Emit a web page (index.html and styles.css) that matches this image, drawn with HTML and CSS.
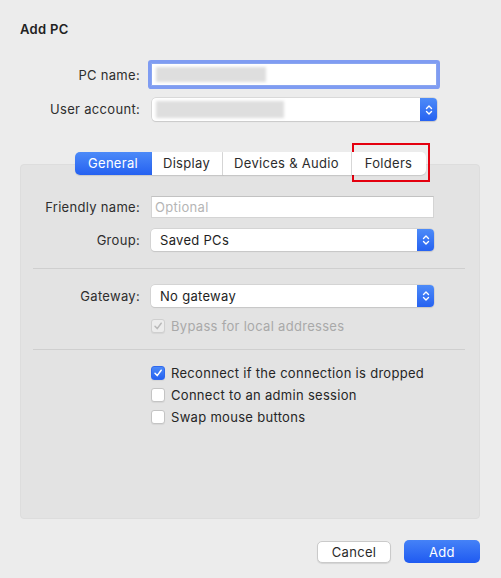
FILE: index.html
```html
<!DOCTYPE html>
<html lang="en">
<head>
    <meta charset="UTF-8">
    <meta name="viewport" content="width=device-width, initial-scale=1.0">
    <title>Add PC</title>
    <link rel="stylesheet" href="styles.css">
</head>
<body>
    <div class="dialog">
        <h1>Add PC</h1>

        <div class="top-form">
            <div class="row">
                <label>PC name:</label>
                <div class="field focused"><span class="blur blur-name"></span></div>
            </div>
            <div class="row">
                <label>User account:</label>
                <div class="select account">
                    <span class="blur blur-account"></span>
                    <span class="stepper">
                        <svg width="8" height="12" viewBox="0 0 8 12"><path d="M1.5 4.5 L4 2 L6.5 4.5 M1.5 7.5 L4 10 L6.5 7.5" fill="none" stroke="#fff" stroke-width="1.4" stroke-linecap="round" stroke-linejoin="round"/></svg>
                    </span>
                </div>
            </div>
        </div>

        <div class="tabs">
            <div class="tab active">General</div>
            <div class="tab">Display</div>
            <div class="tab">Devices &amp; Audio</div>
            <div class="tab last">Folders</div>
        </div>

        <div class="panel">
            <div class="row">
                <label>Friendly name:</label>
                <div class="field placeholder">Optional</div>
            </div>
            <div class="row group-row">
                <label>Group:</label>
                <div class="select">
                    <span class="value">Saved PCs</span>
                    <span class="stepper">
                        <svg width="8" height="12" viewBox="0 0 8 12"><path d="M1.5 4.5 L4 2 L6.5 4.5 M1.5 7.5 L4 10 L6.5 7.5" fill="none" stroke="#fff" stroke-width="1.4" stroke-linecap="round" stroke-linejoin="round"/></svg>
                    </span>
                </div>
            </div>

            <div class="separator"></div>

            <div class="row gateway-row">
                <label>Gateway:</label>
                <div class="select">
                    <span class="value">No gateway</span>
                    <span class="stepper">
                        <svg width="8" height="12" viewBox="0 0 8 12"><path d="M1.5 4.5 L4 2 L6.5 4.5 M1.5 7.5 L4 10 L6.5 7.5" fill="none" stroke="#fff" stroke-width="1.4" stroke-linecap="round" stroke-linejoin="round"/></svg>
                    </span>
                </div>
            </div>
            <div class="check disabled bypass">
                <span class="box">
                    <svg width="10" height="10" viewBox="0 0 10 10"><path d="M2 5.2 L4.2 7.6 L8.2 2.2" fill="none" stroke="#b9b9b9" stroke-width="1.5" stroke-linecap="round" stroke-linejoin="round"/></svg>
                </span>
                Bypass for local addresses
            </div>

            <div class="separator second"></div>

            <div class="checks">
                <div class="check">
                    <span class="box checked">
                        <svg width="10" height="10" viewBox="0 0 10 10"><path d="M2 5.2 L4.2 7.6 L8.2 2.2" fill="none" stroke="#fff" stroke-width="1.5" stroke-linecap="round" stroke-linejoin="round"/></svg>
                    </span>
                    Reconnect if the connection is dropped
                </div>
                <div class="check"><span class="box"></span>Connect to an admin session</div>
                <div class="check"><span class="box"></span>Swap mouse buttons</div>
            </div>
        </div>

        <div class="actions">
            <button class="btn">Cancel</button>
            <button class="btn primary">Add</button>
        </div>

        <div class="highlight"></div>
    </div>
</body>
</html>
```

FILE: styles.css
```css
body {
    margin: 0;
    background: #ececec;
    font-family: Inter, "Liberation Sans", Arial, sans-serif;
    font-size: 13px;
    letter-spacing: 0.3px;
    color: #262626;
}
.dialog {
    position: relative;
    width: 460px;
    height: 578px;
    padding: 0 20px;
}
h1 {
    margin: 0;
    padding-top: 22px;
    font-size: 13px;
    font-weight: 600;
    line-height: 15px;
    color: #222;
}
.top-form {
    margin-top: 26px;
    display: flex;
    flex-direction: column;
    gap: 11px;
}
.row {
    display: grid;
    grid-template-columns: 120px 283px;
    column-gap: 11px;
    align-items: center;
}
.top-form .row {
    grid-template-columns: 120px 286px;
}
label {
    text-align: right;
    color: #2e2e2e;
}
.field {
    position: relative;
    height: 22px;
    box-sizing: border-box;
    background: #fff;
    border: 1px solid #d4d4d4;
    border-top-color: #c2c2c2;
    padding: 0 8px;
    line-height: 20px;
}
.field.focused {
    height: 23px;
    border: 1px solid #8aa6f0;
    box-shadow: 0 0 0 3px #7f9cf2;
    border-radius: 1px;
}
.placeholder {
    color: #b5b5b5;
    padding-left: 3px;
}
.blur {
    position: absolute;
    top: 3px;
    bottom: 3px;
    left: 4px;
    background: #dedede;
    filter: blur(1.5px);
}
.blur-name {
    width: 110px;
}
.blur-account {
    width: 128px;
}
.select {
    position: relative;
    height: 22px;
    box-sizing: border-box;
    background: #fff;
    border-radius: 4px;
    box-shadow: 0 0 0 0.5px #c6c6c6, 0 1px 1px rgba(0, 0, 0, 0.12);
    display: flex;
    align-items: center;
    padding-left: 9px;
}
.account {
    height: 23px;
    margin-left: 1px;
    margin-top: 1px;
}
.value {
    color: #1e1e1e;
}
.stepper {
    position: absolute;
    right: 0;
    top: 0;
    bottom: 0;
    width: 17px;
    border-radius: 0 4px 4px 0;
    background: linear-gradient(#4d8bf8, #2662f1);
    display: flex;
    align-items: center;
    justify-content: center;
}
.tabs {
    position: relative;
    z-index: 1;
    display: flex;
    justify-content: center;
    margin-top: 31px;
    margin-bottom: -11px;
}
.tab {
    height: 23px;
    box-sizing: border-box;
    line-height: 23px;
    text-align: center;
    background: #fff;
    color: #2c2c2c;
    border-right: 1px solid #dadada;
    box-shadow: 0 1px 1px rgba(0, 0, 0, 0.12);
}
.tab:nth-child(1) { width: 77px; }
.tab:nth-child(2) { width: 71px; }
.tab:nth-child(3) { width: 129px; }
.tab:nth-child(4) { width: 74px; }
.tab.active {
    background: linear-gradient(#4c8af8, #2561f1);
    color: #fff;
    border-radius: 5px 0 0 5px;
    border-right: none;
}
.tab.last {
    border-radius: 0 5px 5px 0;
    border-right: none;
}
.panel {
    height: 355px;
    box-sizing: border-box;
    background: #e3e3e3;
    border: 1px solid #dddddd;
    border-radius: 4px;
    padding-top: 31px;
}
.panel .row {
    margin-left: -1px;
}
.group-row {
    margin-top: 11px;
}
.separator {
    height: 1px;
    background: #cfcfcf;
    margin: 17px 14px 0 12px;
}
.gateway-row {
    margin-top: 16px;
}
.check {
    display: flex;
    align-items: center;
    gap: 6px;
    height: 22px;
    margin-left: 130px;
    color: #262626;
}
.check.disabled {
    color: #a9a9a9;
}
.bypass {
    margin-top: 10px;
    height: 18px;
}
.separator.second {
    margin-top: 14px;
}
.box {
    width: 14px;
    height: 14px;
    box-sizing: border-box;
    background: #fff;
    border: 1px solid #c4c4c4;
    border-radius: 3px;
    display: flex;
    align-items: center;
    justify-content: center;
    box-shadow: 0 1px 1px rgba(0, 0, 0, 0.06);
}
.check.disabled .box {
    background: #ececec;
    border-color: #cfcfcf;
}
.box.checked {
    background: linear-gradient(#4c8af8, #2561f1);
    border-color: #2f68ee;
}
.checks {
    margin-top: 12px;
}
.actions {
    display: flex;
    justify-content: flex-end;
    gap: 13px;
    margin-top: 21px;
}
.btn {
    height: 23px;
    border-radius: 5px;
    font-family: Inter, "Liberation Sans", Arial, sans-serif;
    font-size: 13px;
    letter-spacing: 0.3px;
    padding: 0;
    cursor: pointer;
}
.btn:first-child {
    width: 74px;
    background: #fff;
    color: #2a2a2a;
    border: 1px solid #cacaca;
    box-shadow: 0 1px 1px rgba(0, 0, 0, 0.1);
    margin-top: 1px;
    height: 22px;
}
.btn.primary {
    width: 76px;
    border: none;
    color: #fff;
    background: linear-gradient(#4582f7, #1f5af1);
}
.highlight {
    position: absolute;
    left: 352px;
    top: 143px;
    width: 74px;
    height: 35px;
    border: 2px solid #e4000f;
}
```
